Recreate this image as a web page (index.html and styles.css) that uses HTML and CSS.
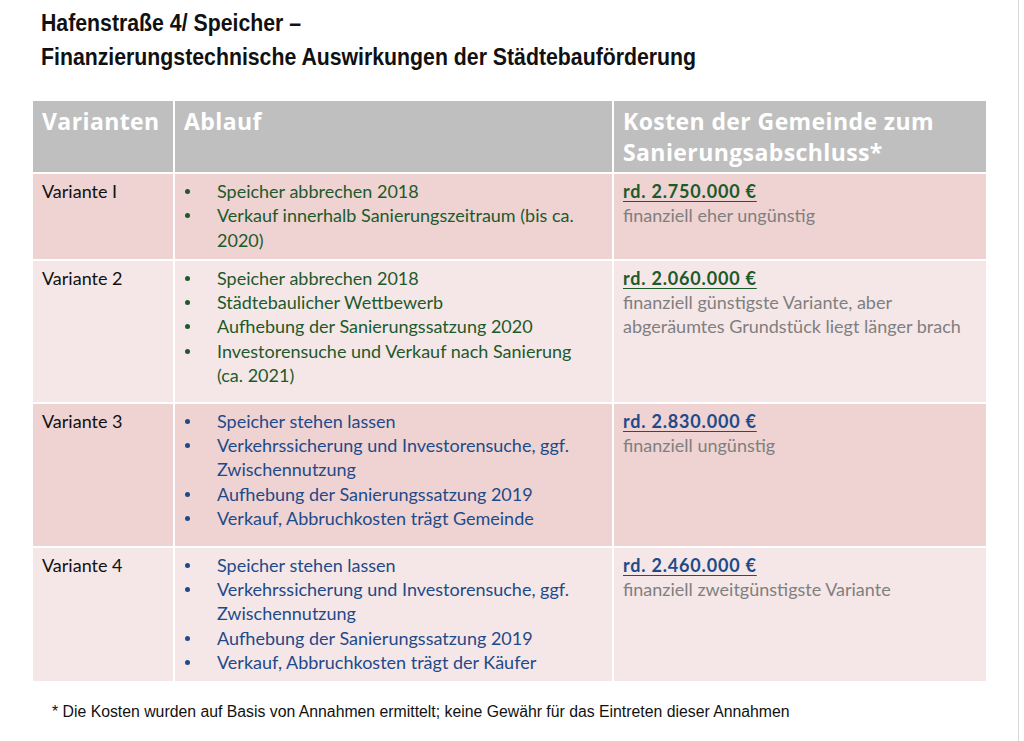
FILE: index.html
```html
<!DOCTYPE html>
<html lang="de">
<head>
<meta charset="utf-8">
<title>Hafenstraße 4/ Speicher</title>
<link rel="stylesheet" href="styles.css">
</head>
<body>
<div class="page">
  <h1 class="title">Hafenstraße 4/ Speicher –<br>Finanzierungstechnische Auswirkungen der Städtebauförderung</h1>
  <table class="grid">
    <colgroup>
      <col class="c1"><col class="c2"><col class="c3">
    </colgroup>
    <thead>
      <tr>
        <th>Varianten</th>
        <th>Ablauf</th>
        <th>Kosten der Gemeinde zum Sanierungsabschluss*</th>
      </tr>
    </thead>
    <tbody>
      <tr class="dark r1">
        <td class="name">Variante I</td>
        <td class="flow"><ul class="steps green">
          <li>Speicher abbrechen 2018</li>
          <li>Verkauf innerhalb Sanierungszeitraum (bis ca. 2020)</li>
        </ul></td>
        <td><div class="cost green">rd. 2.750.000 €</div><div class="note">finanziell eher ungünstig</div></td>
      </tr>
      <tr class="light r2">
        <td class="name">Variante 2</td>
        <td class="flow"><ul class="steps green">
          <li>Speicher abbrechen 2018</li>
          <li>Städtebaulicher Wettbewerb</li>
          <li>Aufhebung der Sanierungssatzung 2020</li>
          <li>Investorensuche und Verkauf nach Sanierung (ca. 2021)</li>
        </ul></td>
        <td><div class="cost green">rd. 2.060.000 €</div><div class="note">finanziell günstigste Variante, aber abgeräumtes Grundstück liegt länger brach</div></td>
      </tr>
      <tr class="dark r3">
        <td class="name">Variante 3</td>
        <td class="flow"><ul class="steps blue">
          <li>Speicher stehen lassen</li>
          <li>Verkehrssicherung und Investorensuche, ggf. Zwischennutzung</li>
          <li>Aufhebung der Sanierungssatzung 2019</li>
          <li>Verkauf, Abbruchkosten trägt Gemeinde</li>
        </ul></td>
        <td><div class="cost blue">rd. 2.830.000 €</div><div class="note">finanziell ungünstig</div></td>
      </tr>
      <tr class="light r4">
        <td class="name">Variante 4</td>
        <td class="flow"><ul class="steps blue">
          <li>Speicher stehen lassen</li>
          <li>Verkehrssicherung und Investorensuche, ggf. Zwischennutzung</li>
          <li>Aufhebung der Sanierungssatzung 2019</li>
          <li>Verkauf, Abbruchkosten trägt der Käufer</li>
        </ul></td>
        <td><div class="cost blue">rd. 2.460.000 €</div><div class="note">finanziell zweitgünstigste Variante</div></td>
      </tr>
    </tbody>
  </table>
  <p class="footnote">* Die Kosten wurden auf Basis von Annahmen ermittelt; keine Gewähr für das Eintreten dieser Annahmen</p>
</div>
</body>
</html>
```
FILE: styles.css
```css
html, body {
  margin: 0;
  padding: 0;
  background: #ffffff;
}
.page {
  width: 1019px;
  height: 741px;
  border-right: 1px solid #d8d8d8;
  box-sizing: border-box;
  padding: 6px 0 0 31px;
  overflow: hidden;
}
.title {
  margin: 0 0 0 10px;
  font-family: "Liberation Sans", Arial, sans-serif;
  font-weight: bold;
  font-size: 23.5px;
  line-height: 34px;
  color: #111;
  white-space: nowrap;
  transform: scaleX(0.905);
  transform-origin: left top;
}
.grid {
  margin-top: 25px;
  width: 955px;
  border-collapse: collapse;
  table-layout: fixed;
  font-family: "Lato", "Open Sans", sans-serif;
  font-size: 18px;
  line-height: 24.3px;
}
.c1 { width: 142px; }
.c2 { width: 439px; }
.c3 { width: 374px; }
.grid th, .grid td {
  border: 2px solid #ffffff;
  vertical-align: top;
  text-align: left;
}
.grid th {
  background: #bfbfbf;
  color: #ffffff;
  font-family: "Open Sans", "Lato", sans-serif;
  font-weight: bold;
  font-size: 23px;
  letter-spacing: 0.4px;
  line-height: 31px;
  padding: 5px 8px 4px 9px;
  height: 62px;
}
.grid td {
  padding: 5px 12px 7px 9px;
  color: #111;
}
.grid td.flow {
  padding-right: 25px;
}
.dark td { background: #eed3d2; }
.light td { background: #f5e7e7; }
.r1 td { height: 70px; }
.r2 td { height: 129px; }
.r3 td { height: 130px; }
.r4 td { height: 118px; }
.steps {
  list-style: none;
  margin: 0;
  padding: 0;
}
.steps li {
  position: relative;
  padding-left: 33px;
}
.steps li::before {
  content: "";
  position: absolute;
  left: 1px;
  top: 10px;
  width: 5px;
  height: 5px;
  border-radius: 50%;
  background: currentColor;
}
.green { color: #1d5a2b; }
.blue { color: #1f4a8a; }
.cost {
  font-weight: bold;
  font-size: 18px;
  letter-spacing: 0.8px;
  text-decoration: underline;
  text-underline-offset: 3px;
}
.note { color: #7f7f7f; }
.footnote {
  margin: 20px 0 0 21px;
  font-family: "Liberation Sans", Arial, sans-serif;
  font-size: 15.8px;
  color: #111;
}
```
